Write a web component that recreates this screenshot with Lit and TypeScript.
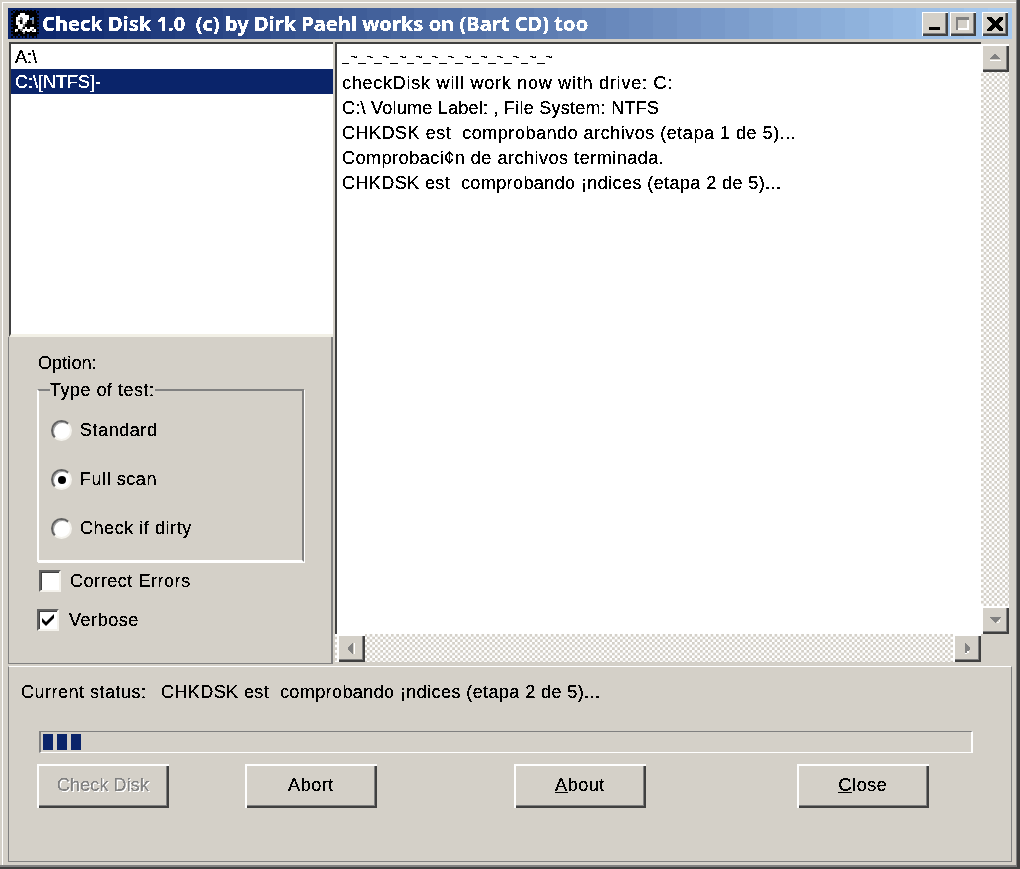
import { LitElement, html, css, svg } from "lit";
import { customElement } from "lit/decorators.js";

const ICON = [
  "nknknknknknknknn",
  "knkkkkkkkkkkkknk",
  "nkkkkwwwkkkkkkkn",
  "kkkkwwwwwwkkkkkk",
  "nkkwwgwwwwkkbkkn",
  "kkkwwggwwwkbbkkk",
  "nkkwgkgwwkkkgkkn",
  "kkkwwkgwgkkkgkkk",
  "nkkwwwwgkkkkkkkn",
  "kkkkwwwgkkkkkkkk",
  "nkkkwwgkwkkwwkkn",
  "kkwwkggwwwwwgwkk",
  "nkwgkkwwkwwkwwkn",
  "kkkkkkkgkkkkkkkk",
  "nkkknkkkknkkkkkn",
  "knknknknknknknkn",
];
const PAL: Record<string, string> = { n: "#0a246a", k: "#000", w: "#fff", g: "#808080", b: "#5a8ad0" };

function band(): string {
  const from = [10, 36, 106], to = [166, 202, 240], n = 42;
  const stops: string[] = [];
  for (let i = 0; i < n; i++) {
    const c = from.map((f, k) => Math.round(f + ((to[k] - f) * i) / (n - 1)));
    const a = ((i / n) * 100).toFixed(2), b = (((i + 1) / n) * 100).toFixed(2);
    stops.push(`rgb(${c.join(",")}) ${a}% ${b}%`);
  }
  return `background:linear-gradient(90deg,${stops.join(",")})`;
}

@customElement("app-root")
export class AppRoot extends LitElement {
  static styles = css`
    :host { display: block; width: 1020px; height: 869px; font-family: "Liberation Sans", Arial, sans-serif; font-size: 18px; letter-spacing: 0.55px; color: #000; }
    * { box-sizing: border-box; }
    .defs { position: absolute; width: 0; height: 0; }
    .t { filter: url(#crisp); white-space: pre; }
    .window { width: 1020px; height: 869px; background: #d4d0c8; padding: 8px 8px 7px 8px; display: flex; flex-direction: column;
      box-shadow: inset -3px -2px 0 #404040, inset -4px -4px 0 #808080, inset 2px 2px 0 #d4d0c8, inset 3px 3px 0 #fff; }
    .title { height: 31px; flex: none; display: flex; align-items: center; padding: 0 4px 0 3px; color: #fff; }
    .logo { width: 28px; height: 29px; flex: none; display: block; shape-rendering: crispEdges; }
    .caption { font-family: "Noto Sans", sans-serif; font-weight: 700; font-size: 20px; letter-spacing: 0.05px; line-height: 31px; margin-left: 3px; flex: 1; }
    .tb { width: 26px; height: 24px; flex: none; display: flex; align-items: center; justify-content: center; background: #d4d0c8; margin-left: 2px;
      box-shadow: inset 1px 1px 0 #fff, inset -2px -2px 0 #404040, inset -3px -3px 0 #808080; }
    .tb svg { display: block; shape-rendering: crispEdges; }
    .tb.x { margin-left: 6px; }
    .body { height: 622px; margin-top: 3px; flex: none; display: flex; }
    .left { width: 325px; flex: none; display: flex; flex-direction: column; }
    .list { height: 295px; flex: none; margin-left: 1px; background: #fff; border-top: 2px solid #404040; border-left: 2px solid #404040; border-bottom: 3px solid #f2f0e6; letter-spacing: 0; }
    .row { height: 25px; line-height: 27px; padding-left: 4px; }
    .row.sel { background: #0a246a; color: #fff; }
    .opts { flex: 1; padding: 14px 0 0 28px; border-left: 1px solid #808080; border-right: 2px solid #808080; border-bottom: 1px solid #808080; }
    .line { line-height: 25px; height: 25px; margin-left: 1px; letter-spacing: 0.1px; }
    fieldset { width: 267px; height: 183px; margin: 3px 0 0 0; padding: 5px 0 0 12px; border: 2px solid #808080; border-bottom-color: #fff; border-left-color: #fff;
      box-shadow: 1px 1px 0 #fff; display: block; }
    legend { padding: 0; margin-left: -1px; line-height: 22px; background: #d4d0c8; letter-spacing: 0.5px; }
    .radio-row { height: 49px; display: flex; align-items: center; gap: 8px; }
    .radio { width: 21px; height: 21px; flex: none; border-radius: 50%; background: #fff; border: 2px solid; border-color: #606060 #f4f2ec #f4f2ec #606060; box-shadow: inset 1px 1px 0 #a0a0a0; display: flex; align-items: center; justify-content: center; }
    .radio i { width: 8px; height: 8px; border-radius: 50%; background: #000; display: block; }
    .check-row { display: flex; align-items: center; height: 22px; gap: 9px; }
    .c1 { margin: 8px 0 0 2px; }
    .c2 { margin: 17px 0 0 0; gap: 10px; }
    .box { width: 22px; height: 22px; flex: none; background: #fff; border: 2px solid; border-color: #606060 #f4f2ec #f4f2ec #606060; box-shadow: inset 1px 1px 0 #404040; display: flex; align-items: center; justify-content: center; }
    .box svg { display: block; }
    .right { flex: 1; margin-left: 2px; padding: 0 3px 2px 0; display: grid; grid-template-columns: 1fr 28px; grid-template-rows: 1fr 28px; }
    .text { background: #fff; padding: 2px 0 0 5px; border-top: 2px solid #404040; border-left: 2px solid #404040; line-height: 25px; min-height: 0; overflow: hidden; }
    .text div { height: 25px; }
    .text .tilde-row { line-height: 19px; }
    .tilde { font-size: 13px; letter-spacing: 0.72px; }
    .wide { letter-spacing: 0.76px; }
    .vol { letter-spacing: 0.25px; }
    .mid { letter-spacing: 0.52px; }
    .narrow { letter-spacing: 0.41px; }
    .vbar { margin-top: 2px; display: flex; flex-direction: column; background: repeating-conic-gradient(#d4d0c8 0 25%, #fff 0 50%) 0 0 / 5.33px 5.33px; }
    .hbar { display: flex; padding-left: 2px; background: repeating-conic-gradient(#d4d0c8 0 25%, #fff 0 50%) 0 0 / 5.33px 5.33px; }
    .sb { width: 28px; height: 28px; flex: none; background: #d4d0c8; display: flex; align-items: center; justify-content: center;
      box-shadow: inset 2px 2px 0 #fff, inset -2px -2px 0 #404040, inset -3px -3px 0 #808080; }
    .sb svg { display: block; shape-rendering: crispEdges; }
    .spacer { flex: 1; }
    .corner { background: #d4d0c8; }
    .bottom { flex: 1; margin-top: 2px; padding: 13px 0 0 12px; border-top: 1px solid #fff; border-left: 1px solid #808080; border-right: 1px solid #808080; border-bottom: 1px solid #808080; }
    .status { display: flex; line-height: 25px; height: 25px; }
    .status .lab { width: 140px; flex: none; letter-spacing: 0.5px; }
    .progress { width: 934px; height: 22px; margin: 26px 0 0 18px; border-top: 1px solid #808080; border-left: 2px solid #808080; border-right: 2px solid #fff; border-bottom: 1px solid #fff; padding: 2px 0 0 2px; display: flex; gap: 4px; }
    .progress i { width: 10px; height: 16px; background: #0a246a; display: block; }
    .buttons { display: flex; margin: 11px 0 0 16px; }
    .btn { width: 132px; height: 44px; flex: none; display: flex; align-items: center; justify-content: center; background: #d4d0c8; line-height: 1; padding-bottom: 2px;
      box-shadow: inset 2px 2px 0 #fff, inset -2px -2px 0 #404040, inset -3px -3px 0 #808080; }
    .btn.off { color: #808080; letter-spacing: 0.1px; }
    .btn.off .t { text-shadow: 1px 1px 0 #fff; }
    .g2 { margin-left: 76px; }
    .g3 { margin-left: 137px; }
    .g4 { margin-left: 151px; }
  `;

  render() {
    const A = "#808080";
    return html`
      <svg class="defs" aria-hidden="true"><filter id="crisp" x="-5%" y="-20%" width="110%" height="140%" color-interpolation-filters="sRGB">
        <feComponentTransfer><feFuncA type="discrete" tableValues="0 1 1"></feFuncA></feComponentTransfer></filter></svg>
      <div class="window">
        <div class="title" style=${band()}>
          <svg class="logo" viewBox="0 0 16 16">
            ${ICON.map((r, y) => [...r].map((c, x) => svg`<rect x=${x} y=${y} width="1.02" height="1.02" fill=${PAL[c]}></rect>`))}
          </svg>
          <span class="caption t">Check Disk 1.0  (c) by Dirk Paehl works on (Bart CD) too</span>
          <div class="tb"><svg width="14" height="14"><rect x="1" y="10" width="11" height="3" fill="#000"/></svg></div>
          <div class="tb"><svg width="16" height="16" viewBox="0 0 16 16"><path d="M1 1h13v13H1z M3 4v8h9V4z" fill-rule="evenodd" fill="#808080"/><rect x="3" y="12" width="9" height="2" fill="#fff"/><rect x="12" y="4" width="2" height="10" fill="#fff"/></svg></div>
          <div class="tb x"><svg width="16" height="14" viewBox="0 0 16 14"><path d="M0 0h4l4 4 4-4h4v2l-5 5 5 5v2h-4l-4-4-4 4H0v-2l5-5-5-5z" fill="#000"/></svg></div>
        </div>
        <div class="body">
          <div class="left">
            <div class="list">
              <div class="row"><span class="t">A:\\</span></div>
              <div class="row sel"><span class="t">C:\\[NTFS]-</span></div>
            </div>
            <div class="opts">
              <div class="line"><span class="t">Option:</span></div>
              <fieldset>
                <legend><span class="t">Type of test:</span></legend>
                <div class="radio-row"><span class="radio"></span><span class="t">Standard</span></div>
                <div class="radio-row"><span class="radio"><i></i></span><span class="t">Full scan</span></div>
                <div class="radio-row"><span class="radio"></span><span class="t">Check if dirty</span></div>
              </fieldset>
              <div class="check-row c1"><span class="box"></span><span class="t">Correct Errors</span></div>
              <div class="check-row c2"><span class="box"><svg width="14" height="14" viewBox="0 0 14 14"><path d="M1 5l4 4 8-8v4l-8 8-4-4z" fill="#000"/></svg></span><span class="t">Verbose</span></div>
            </div>
          </div>
          <div class="right">
            <div class="text">
              <div class="tilde-row"><span class="t tilde">${"_~".repeat(13)}</span></div>
              <div><span class="t wide">checkDisk will work now with drive: C:</span></div>
              <div><span class="t vol">C:\\ Volume Label: , File System: NTFS</span></div>
              <div><span class="t mid">CHKDSK est\u00a0 comprobando archivos (etapa 1 de 5)...</span></div>
              <div><span class="t mid">Comprobaci¢n de archivos terminada.</span></div>
              <div><span class="t narrow">CHKDSK est\u00a0 comprobando ¡ndices (etapa 2 de 5)...</span></div>
            </div>
            <div class="vbar">
              <div class="sb"><svg width="16" height="14"><path d="M8 3h1v1h1v1h1v1h1v1h1v1H3V7h1V6h1V5h1V4h1V3z" fill=${A}/><rect x="3" y="9" width="11" height="1" fill="#fff"/></svg></div>
              <div class="spacer"></div>
              <div class="sb"><svg width="16" height="14"><path d="M3 4h11v1h-1v1h-1v1h-1v1h-1v1H9v1H8V9H7V8H6V7H5V6H4V5H3z" fill=${A}/><rect x="10" y="9" width="2" height="1" fill="#fff"/><rect x="12" y="7" width="1" height="2" fill="#fff"/></svg></div>
            </div>
            <div class="hbar">
              <div class="sb"><svg width="14" height="16"><path d="M9 2v12H8v-1H7v-1H6v-1H5v-1H4V7h1V6h1V5h1V4h1V3h1z" fill=${A}/><rect x="10" y="3" width="1" height="11" fill="#fff"/></svg></div>
              <div class="spacer"></div>
              <div class="sb"><svg width="14" height="16"><path d="M5 2v12h1v-1h1v-1h1v-1h1v-1h1V7H9V6H8V5H7V4H6V3H5z" fill=${A}/><rect x="5" y="13" width="2" height="1" fill="#fff"/><rect x="7" y="11" width="2" height="2" fill="#fff"/></svg></div>
            </div>
            <div class="corner"></div>
          </div>
        </div>
        <div class="bottom">
          <div class="status"><span class="lab t">Current status:</span><span class="t narrow">CHKDSK est\u00a0 comprobando ¡ndices (etapa 2 de 5)...</span></div>
          <div class="progress"><i></i><i></i><i></i></div>
          <div class="buttons">
            <div class="btn off"><span class="t">Check Disk</span></div>
            <div class="btn g2"><span class="t">Abort</span></div>
            <div class="btn g3"><span class="t"><u>A</u>bout</span></div>
            <div class="btn g4"><span class="t"><u>C</u>lose</span></div>
          </div>
        </div>
      </div>
    `;
  }
}
